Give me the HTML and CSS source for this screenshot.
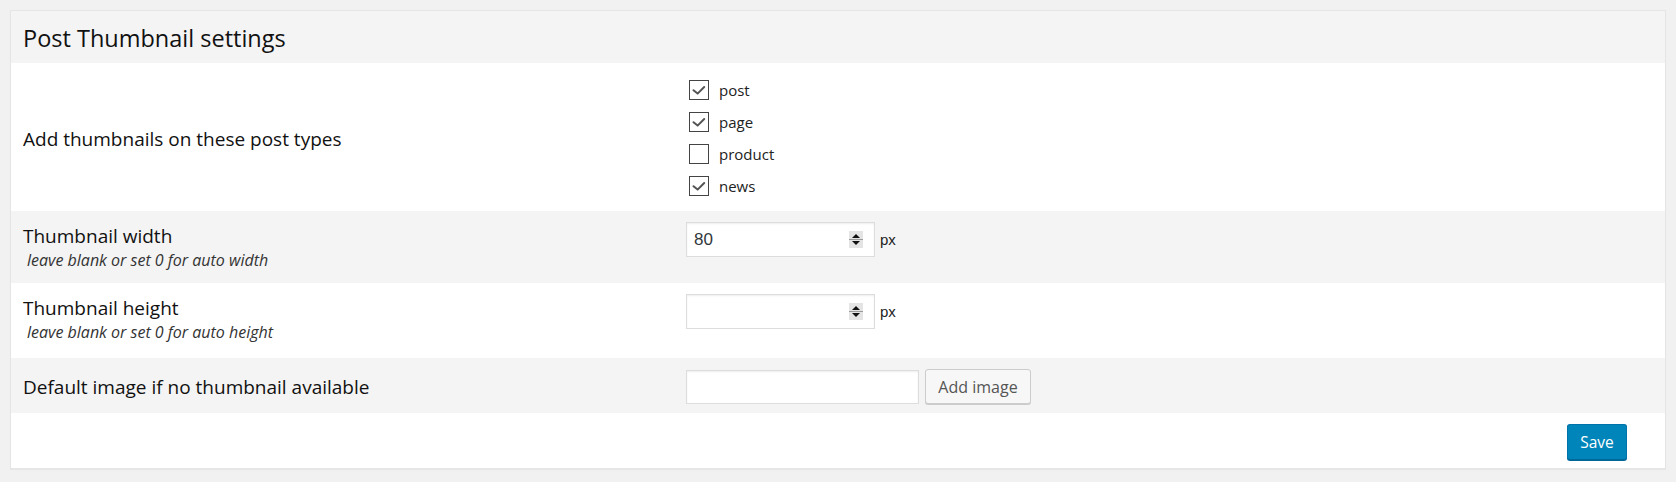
FILE: index.html
```html
<!DOCTYPE html>
<html>
<head>
<meta charset="utf-8">
<link rel="stylesheet" href="styles.css">
</head>
<body>
<div class="panel">
  <div class="panel-head">Post Thumbnail settings</div>

  <div class="row row-types">
    <div class="lbl lbl-center">Add thumbnails on these post types</div>
    <div class="field">
      <ul class="checks">
        <li><span class="cb on"><svg viewBox="0 0 20 20" width="20" height="20"><path d="M4.5 10.2 L8.6 13.6 L15.2 7" fill="none" stroke="#555" stroke-width="2" stroke-linecap="round" stroke-linejoin="round"/></svg></span>post</li>
        <li><span class="cb on"><svg viewBox="0 0 20 20" width="20" height="20"><path d="M4.5 10.2 L8.6 13.6 L15.2 7" fill="none" stroke="#555" stroke-width="2" stroke-linecap="round" stroke-linejoin="round"/></svg></span>page</li>
        <li><span class="cb"></span>product</li>
        <li><span class="cb on"><svg viewBox="0 0 20 20" width="20" height="20"><path d="M4.5 10.2 L8.6 13.6 L15.2 7" fill="none" stroke="#555" stroke-width="2" stroke-linecap="round" stroke-linejoin="round"/></svg></span>news</li>
      </ul>
    </div>
  </div>

  <div class="row row-alt row-w">
    <div class="lbl">
      <div class="lbl-main">Thumbnail width</div>
      <div class="hint">leave blank or set 0 for auto width</div>
    </div>
    <div class="field">
      <div class="inline">
        <div class="numbox"><span class="val">80</span><span class="spin"><i class="up"></i><b class="sep"></b><i class="dn"></i></span></div>
        <span class="unit">px</span>
      </div>
    </div>
  </div>

  <div class="row row-h">
    <div class="lbl">
      <div class="lbl-main">Thumbnail height</div>
      <div class="hint">leave blank or set 0 for auto height</div>
    </div>
    <div class="field">
      <div class="inline">
        <div class="numbox"><span class="val"></span><span class="spin"><i class="up"></i><b class="sep"></b><i class="dn"></i></span></div>
        <span class="unit">px</span>
      </div>
    </div>
  </div>

  <div class="row row-alt row-img">
    <div class="lbl lbl-center">Default image if no thumbnail available</div>
    <div class="field">
      <div class="inline">
        <div class="textbox"></div>
        <button class="btn">Add image</button>
      </div>
    </div>
  </div>

  <div class="foot">
    <button class="btn-primary">Save</button>
  </div>
</div>
</body>
</html>
```
FILE: styles.css
```css
html, body {
  margin: 0;
  padding: 0;
  background: #f1f1f1;
}
body {
  padding: 10px;
  font-family: "Open Sans", "Noto Sans", sans-serif;
  color: #111;
}
.panel {
  background: #fff;
  border: 1px solid #e5e5e5;
  box-shadow: 0 1px 1px rgba(0,0,0,.04);
}
.panel-head {
  box-sizing: border-box;
  height: 52px;
  line-height: 52px;
  padding-top: 1px;
  background: #f4f4f4;
  padding-left: 12px;
  font-size: 23.5px;
  color: #111;
}
.row {
  display: grid;
  grid-template-columns: 675px 1fr;
}
.row-alt {
  background: #f4f4f4;
}
.row-types { height: 148px; }
.row-w { height: 72px; }
.row-h { height: 75px; }
.row-img { height: 55px; }
.lbl {
  padding-left: 12px;
  font-size: 19px;
  color: #111;
}
.lbl-center {
  display: flex;
  align-items: center;
  padding-top: 3px;
  box-sizing: border-box;
}
.row-w .lbl, .row-h .lbl {
  padding-top: 13px;
}
.lbl-main {
  line-height: 24px;
}
.hint {
  font-style: italic;
  font-size: 16px;
  line-height: 22px;
  margin-top: 1px;
  color: #333;
  padding-left: 4px;
}
.field {
  padding-top: 11px;
}
.checks {
  list-style: none;
  margin: 0;
  padding: 6px 0 0 0;
  display: flex;
  flex-direction: column;
  gap: 12px;
}
.checks li {
  display: flex;
  align-items: center;
  height: 20px;
  font-size: 15px;
  color: #222;
}
.cb {
  box-sizing: border-box;
  width: 20px;
  height: 20px;
  border: 1px solid #444;
  margin: 0 10px 0 3px;
  background: #fff;
  display: flex;
}
.cb svg {
  margin: -1px;
}
.inline {
  display: flex;
  align-items: center;
  gap: 5px;
}
.numbox {
  box-sizing: border-box;
  width: 189px;
  height: 35px;
  border: 1px solid #ddd;
  background: #fff;
  box-shadow: inset 0 1px 2px rgba(0,0,0,.07);
  display: flex;
  align-items: center;
  justify-content: space-between;
  padding: 0 11px 0 7px;
  font-family: "Liberation Sans", Arial, sans-serif;
  font-size: 17px;
  color: #32373c;
}
.spin {
  box-sizing: border-box;
  width: 14px;
  height: 17px;
  background: #e4e4e4;
  display: flex;
  flex-direction: column;
  align-items: center;
  justify-content: space-between;
  padding: 3px 0 3px;
}
.spin .sep {
  display: block;
  width: 100%;
  height: 1px;
  background: #9a9a9a;
}
.spin i {
  display: block;
  width: 0;
  height: 0;
  border-left: 4px solid transparent;
  border-right: 4px solid transparent;
}
.spin .up { border-bottom: 4px solid #111; }
.spin .dn { border-top: 4px solid #111; }
.unit {
  font-family: "Liberation Sans", Arial, sans-serif;
  font-size: 15px;
  color: #222;
}
.textbox {
  box-sizing: border-box;
  width: 233px;
  height: 34px;
  border: 1px solid #ddd;
  background: #fff;
  box-shadow: inset 0 1px 2px rgba(0,0,0,.07);
}
.btn {
  box-sizing: border-box;
  height: 35px;
  width: 106px;
  padding: 0;
  margin-left: 1px;
  border: 1px solid #ccc;
  border-radius: 3px;
  background: #f7f7f7;
  box-shadow: 0 1px 0 #ccc;
  font-family: "Open Sans", sans-serif;
  font-size: 16px;
  color: #555;
}
.foot {
  height: 55px;
  display: flex;
  justify-content: flex-end;
  align-items: flex-start;
  padding-right: 38px;
}
.btn-primary {
  margin-top: 11px;
  box-sizing: border-box;
  width: 60px;
  height: 36px;
  padding: 0;
  background: #0085ba;
  border: 1px solid #0073aa;
  border-bottom-color: #006799;
  border-radius: 3px;
  box-shadow: 0 1px 0 #006799;
  color: #fff;
  font-family: "Open Sans", sans-serif;
  font-size: 15.5px;
}
```
